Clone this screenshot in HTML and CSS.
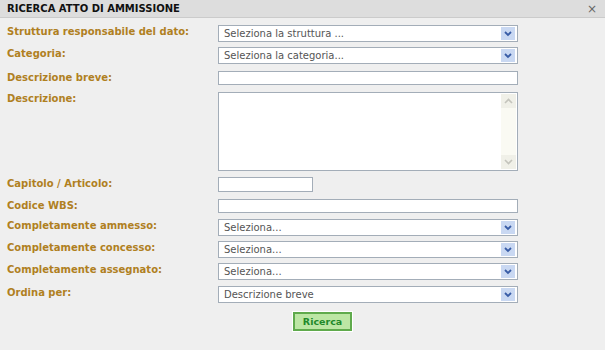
FILE: index.html
```html
<!DOCTYPE html>
<html lang="it">
<head>
  <meta charset="UTF-8" />
  <title>Ricerca atto di ammissione</title>
  <link rel="stylesheet" href="styles.css">
</head>
<body>
  <div class="dialog">
    <div class="titlebar">
      <span class="title">RICERCA ATTO DI AMMISSIONE</span>
      <span class="close">&times;</span>
    </div>
    <form class="form">
      <div class="row">
        <label>Struttura responsabile del dato:</label>
        <div class="select"><span>Seleziona la struttura ...</span><i class="arrow"></i></div>
      </div>
      <div class="row row-wide">
        <label>Categoria:</label>
        <div class="select"><span>Seleziona la categoria...</span><i class="arrow"></i></div>
      </div>
      <div class="row row-wide">
        <label>Descrizione breve:</label>
        <div class="text"></div>
      </div>
      <div class="row row-area">
        <label>Descrizione:</label>
        <div class="area">
          <div class="scroll">
            <i class="up"></i>
            <i class="down"></i>
          </div>
        </div>
      </div>
      <div class="row row-wide">
        <label>Capitolo / Articolo:</label>
        <div class="text short"></div>
      </div>
      <div class="row row-area">
        <label>Codice WBS:</label>
        <div class="text"></div>
      </div>
      <div class="row">
        <label>Completamente ammesso:</label>
        <div class="select"><span>Seleziona...</span><i class="arrow"></i></div>
      </div>
      <div class="row">
        <label>Completamente concesso:</label>
        <div class="select"><span>Seleziona...</span><i class="arrow"></i></div>
      </div>
      <div class="row row-area">
        <label>Completamente assegnato:</label>
        <div class="select"><span>Seleziona...</span><i class="arrow"></i></div>
      </div>
      <div class="row row-last">
        <label>Ordina per:</label>
        <div class="select"><span>Descrizione breve</span><i class="arrow"></i></div>
      </div>
      <div class="actions">
        <button type="button">Ricerca</button>
      </div>
    </form>
  </div>
</body>
</html>
```
FILE: styles.css
```css
body {
  margin: 0;
  background: #efefef;
  font-family: 'DejaVu Sans', Verdana, sans-serif;
  font-size: 11px;
}
.dialog {
  width: 605px;
  height: 350px;
  background: #efefef;
}
.titlebar {
  height: 17px;
  background: #dddddd;
  border-bottom: 1px solid #cbcbcb;
  display: flex;
  align-items: center;
  justify-content: space-between;
  padding: 0 8px 0 7px;
}
.title {
  font-weight: bold;
  font-size: 10px;
  color: #111;
}
.close {
  color: #666;
  font-size: 12px;
  line-height: 1;
}
.form {
  padding: 7px 0 0 7px;
}
.row {
  display: flex;
  align-items: flex-start;
  margin-bottom: 5px;
}
.row-wide {
  margin-bottom: 7px;
}
.row-area {
  margin-bottom: 6px;
}
.row-last {
  margin-bottom: 9px;
}
.row label {
  width: 211px;
  flex: none;
  font-weight: bold;
  font-size: 10px;
  line-height: 13px;
  color: #b0801f;
}
.select {
  width: 293px;
  height: 15px;
  background: #fff;
  border: 1px solid #a3adb8;
  display: flex;
  align-items: center;
  justify-content: space-between;
  padding-left: 5px;
  color: #555;
  font-size: 10px;
}
.arrow {
  width: 14px;
  height: 13px;
  margin-right: 2px;
  background: #c9d8f2 url("data:image/svg+xml,%3Csvg xmlns='http://www.w3.org/2000/svg' width='14' height='13'%3E%3Cpath d='M4 5l3 3 3-3' fill='none' stroke='%23385ca6' stroke-width='1.8'/%3E%3C/svg%3E") no-repeat center;
}
.text {
  width: 298px;
  height: 12px;
  background: #fff;
  border: 1px solid #a3adb8;
}
.text.short {
  width: 93px;
  height: 13px;
}
.area {
  width: 298px;
  height: 77px;
  background: #fff;
  border: 1px solid #a3adb8;
  display: flex;
  justify-content: flex-end;
}
.scroll {
  width: 15px;
  margin: 1px;
  background: #fafaf3;
  display: flex;
  flex-direction: column;
  justify-content: space-between;
}
.scroll i {
  height: 14px;
  background: #f0f0e8 no-repeat center;
}
.scroll .up {
  background-image: url("data:image/svg+xml,%3Csvg xmlns='http://www.w3.org/2000/svg' width='15' height='14'%3E%3Cpath d='M4 9l3.5-3.5 3.5 3.5' fill='none' stroke='%23c4c4bc' stroke-width='1.6'/%3E%3C/svg%3E");
}
.scroll .down {
  background-image: url("data:image/svg+xml,%3Csvg xmlns='http://www.w3.org/2000/svg' width='15' height='14'%3E%3Cpath d='M4 5l3.5 3.5 3.5-3.5' fill='none' stroke='%23c4c4bc' stroke-width='1.6'/%3E%3C/svg%3E");
}
.actions {
  padding-left: 286px;
}
.actions button {
  width: 59px;
  height: 19px;
  background: #bce6a4;
  border: 2px solid #5faa4c;
  box-shadow: 0 0 0 1px #fff;
  color: #22892a;
  font-family: 'DejaVu Sans', Verdana, sans-serif;
  font-weight: bold;
  font-size: 9.5px;
  padding: 0;
}
```
